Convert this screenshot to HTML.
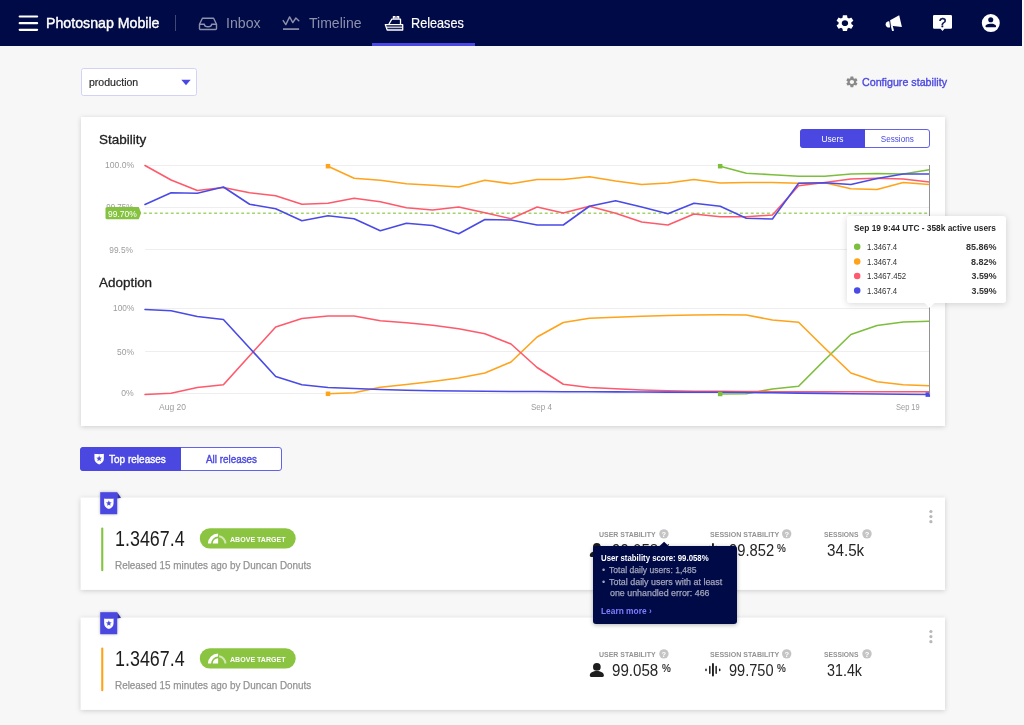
<!DOCTYPE html>
<html lang="en">
<head>
<meta charset="utf-8">
<title>Photosnap Mobile – Releases</title>
<style>
*{box-sizing:border-box;margin:0;padding:0}
html,body{width:1024px;height:725px;overflow:hidden}
body{background:#f7f7f7;font-family:"Liberation Sans",Arial,sans-serif;color:#1a1a1a;position:relative}
#page{position:absolute;left:0;top:0;width:1024px;height:725px;will-change:transform}
.abs{position:absolute;overflow:visible}
.t{position:absolute;white-space:nowrap;line-height:1;display:block}
.card{position:absolute;left:81px;width:864px;background:#fff;box-shadow:0 1px 5px rgba(0,0,0,.17)}
.seg{position:absolute;border:1px solid #6462e6;border-radius:3px;background:#fff}
.seg .on{position:absolute;left:-1px;top:-1px;bottom:-1px;background:#4a48e0;border-radius:3.5px 0 0 3.5px}
.q{position:absolute;width:9px;height:9px;border-radius:50%;background:#c4c4c4}
.dot{position:absolute;width:3px;height:3px;border-radius:50%;background:#bdbdbd}
</style>
</head>
<body>
<div id="page">
<div class="abs" style="left:0;top:0;width:1022px;height:46px;background:#000a47"></div>
<svg class="abs" style="left:0px;top:0px" width="60" height="46" viewBox="0 0 60 46" preserveAspectRatio="none" ><path d="M19.7 16.5H37.1M19.7 23.15H37.1M19.7 29.85H37.1" stroke="#fff" stroke-width="2.2" stroke-linecap="round" fill="none"/></svg>
<span class="t" style="top:16.10px;font-size:14.5px;color:#fff;left:46.40px;transform:scaleX(0.9778);transform-origin:0 50%;-webkit-text-stroke:0.4px #fff;">Photosnap Mobile</span>
<div class="abs" style="left:175px;top:15px;width:1px;height:16px;background:#434872"></div>
<svg class="abs" style="left:198px;top:16px" width="20" height="15" viewBox="0 0 20 15" preserveAspectRatio="none" ><g fill="none" stroke="#8d91ab" stroke-width="1.4" stroke-linejoin="round"><path d="M1.5 8.3 4.4 2.3h11.2l2.9 6v4.2a1 1 0 0 1-1 1H2.5a1 1 0 0 1-1-1z"/><path d="M1.5 8.3h4.9c0 1.5 1.5 2.5 3.6 2.5s3.6-1 3.6-2.5h4.9"/></g></svg>
<span class="t" style="top:15.30px;font-size:15px;color:#8d91ab;left:225.80px;transform:scaleX(0.9427);transform-origin:0 50%;">Inbox</span>
<svg class="abs" style="left:280px;top:12px" width="24" height="22" viewBox="280 12 24 22" preserveAspectRatio="none" ><g fill="none" stroke="#8d91ab" stroke-linejoin="round" stroke-linecap="round"><path stroke-width="1.4" d="M283.2 20.6 285.8 24.6 289.6 16.9 292.8 22.6 295.9 18 298.8 20.8"/><path stroke-width="1.7" stroke-linecap="butt" d="M283 29.1H299.1"/></g></svg>
<span class="t" style="top:15.30px;font-size:15px;color:#8d91ab;left:309.40px;transform:scaleX(0.9352);transform-origin:0 50%;">Timeline</span>
<svg class="abs" style="left:380px;top:10px" width="28" height="24" viewBox="380 10 28 24" preserveAspectRatio="none" ><g fill="none" stroke="#fff" stroke-width="1.3" stroke-linejoin="round"><path d="M393.4 18.8V16.6h1.6v2.2M397 18.8V16.6h1.7v2.2"/><path d="M388.9 24.2 391.8 19.1h8.7v5.1"/><path d="M385.3 24.6h17.4v5.4H387.2z"/><path d="M386.2 27.3H402.6" stroke-width="1.7" stroke-opacity=".75"/></g></svg>
<span class="t" style="top:15.30px;font-size:15px;color:#fff;left:411.30px;transform:scaleX(0.8442);transform-origin:0 50%;-webkit-text-stroke:0.2px #fff;">Releases</span>
<div class="abs" style="left:372px;top:43px;width:103px;height:3px;background:#4a48e0"></div>
<svg class="abs" style="left:836px;top:14px" width="18" height="18" viewBox="1.946 0.909 20.22 21.818" preserveAspectRatio="none" ><path fill="#fff" d="M19.14 12.94c.04-.3.06-.61.06-.94 0-.32-.02-.64-.07-.94l2.03-1.58c.18-.14.23-.41.12-.61l-1.92-3.32c-.12-.22-.37-.29-.59-.22l-2.39.96c-.5-.38-1.03-.7-1.62-.94l-.36-2.54c-.04-.24-.24-.41-.48-.41h-3.84c-.24 0-.43.17-.47.41l-.36 2.54c-.59.24-1.13.57-1.62.94l-2.39-.96c-.22-.08-.47 0-.59.22L2.74 8.87c-.12.21-.08.47.12.61l2.03 1.58c-.05.3-.09.63-.09.94s.02.64.07.94l-2.03 1.58c-.18.14-.23.41-.12.61l1.92 3.32c.12.22.37.29.59.22l2.39-.96c.5.38 1.03.7 1.62.94l.36 2.54c.05.24.24.41.48.41h3.84c.24 0 .44-.17.47-.41l.36-2.54c.59-.24 1.13-.56 1.62-.94l2.39.96c.22.08.47 0 .59-.22l1.92-3.32c.12-.22.07-.47-.12-.61l-2.01-1.58zM12 15.6c-1.98 0-3.6-1.62-3.6-3.6s1.62-3.6 3.6-3.6 3.6 1.62 3.6 3.6-1.62 3.6-3.6 3.6z"/></svg>
<svg class="abs" style="left:880px;top:10px" width="30" height="26" viewBox="880 10 30 26" preserveAspectRatio="none" ><g fill="#fff"><path d="M890.1 20.3 899.2 15.2 901.9 26.9 890.9 25.8Z"/><path d="M889.4 21.4 890.1 27.2A3.2 3.2 0 0 1 885.6 24.9 3.2 3.2 0 0 1 889.4 21.4Z"/><path d="M890.7 25.6 892.7 25.8 894 30.8 892.1 31.1Z"/></g></svg>
<svg class="abs" style="left:933px;top:15px" width="19" height="17" viewBox="0 0 19 17" preserveAspectRatio="none" ><path fill="#fff" d="M1.2 0h16.6a1.2 1.2 0 0 1 1.2 1.2v11.4a1.2 1.2 0 0 1-1.2 1.2h-6.3l-2 2.3-2-2.3H1.2a1.2 1.2 0 0 1-1.2-1.2V1.2A1.2 1.2 0 0 1 1.2 0z"/></svg>
<span class="t" style="top:16.00px;font-size:13px;color:#000a47;left:938.88px;-webkit-text-stroke:0.5px #000a47;">?</span>
<svg class="abs" style="left:980px;top:12px" width="22" height="22" viewBox="980 12 22 22" preserveAspectRatio="none" ><path fill="#fff" fill-rule="evenodd" d="M981.8 23.1a9 9 0 1 0 18 0a9 9 0 1 0 -18 0ZM988.2 19.7a2.55 2.55 0 1 0 5.1 0a2.55 2.55 0 1 0 -5.1 0ZM985.5 26.4c0-1.9 2.6-2.7 5.3-2.7s5.3.8 5.3 2.7c0 .5-.3.8-.8.8h-9c-.5 0-.8-.3-.8-.8Z"/></svg>
<div class="abs" style="left:80.5px;top:68px;width:116px;height:27.5px;background:#fff;border:1px solid #d2d2f6;border-radius:2.5px"></div>
<span class="t" style="top:76.60px;font-size:11px;color:#2a2a2a;left:88.90px;transform:scaleX(0.9577);transform-origin:0 50%;-webkit-text-stroke:0.2px #2a2a2a;">production</span>
<svg class="abs" style="left:181px;top:79px" width="10" height="7" viewBox="0 0 10 7" preserveAspectRatio="none" ><path fill="#4a48e0" d="M.3.8h9.4L5 6.2z"/></svg>
<svg class="abs" style="left:846px;top:76px" width="12" height="12" viewBox="2.118 1.273 20.1 21.818" preserveAspectRatio="none" ><path fill="#8a8a8a" d="M19.14 12.94c.04-.3.06-.61.06-.94 0-.32-.02-.64-.07-.94l2.03-1.58c.18-.14.23-.41.12-.61l-1.92-3.32c-.12-.22-.37-.29-.59-.22l-2.39.96c-.5-.38-1.03-.7-1.62-.94l-.36-2.54c-.04-.24-.24-.41-.48-.41h-3.84c-.24 0-.43.17-.47.41l-.36 2.54c-.59.24-1.13.57-1.62.94l-2.39-.96c-.22-.08-.47 0-.59.22L2.74 8.87c-.12.21-.08.47.12.61l2.03 1.58c-.05.3-.09.63-.09.94s.02.64.07.94l-2.03 1.58c-.18.14-.23.41-.12.61l1.92 3.32c.12.22.37.29.59.22l2.39-.96c.5.38 1.03.7 1.62.94l.36 2.54c.05.24.24.41.48.41h3.84c.24 0 .44-.17.47-.41l.36-2.54c.59-.24 1.13-.56 1.62-.94l2.39.96c.22.08.47 0 .59-.22l1.92-3.32c.12-.22.07-.47-.12-.61l-2.01-1.58zM12 15.6c-1.98 0-3.6-1.62-3.6-3.6s1.62-3.6 3.6-3.6 3.6 1.62 3.6 3.6-1.62 3.6-3.6 3.6z"/></svg>
<span class="t" style="top:77.00px;font-size:11px;color:#4a48e0;left:862.20px;transform:scaleX(0.9721);transform-origin:0 50%;-webkit-text-stroke:0.35px #4a48e0;">Configure stability</span>
<div class="card" style="top:117px;height:309px"></div>
<span class="t" style="top:133.40px;font-size:13px;color:#222;left:99.20px;transform:scaleX(1.0367);transform-origin:0 50%;-webkit-text-stroke:0.3px #222;">Stability</span>
<span class="t" style="top:276.20px;font-size:13px;color:#222;left:99.20px;transform:scaleX(1.0345);transform-origin:0 50%;-webkit-text-stroke:0.3px #222;">Adoption</span>
<div class="seg" style="left:800px;top:129px;width:130px;height:19px"><div class="on" style="width:65px"></div></div>
<span class="t" style="top:134.20px;font-size:9.5px;color:#fff;left:820.09px;transform:scaleX(0.8866);transform-origin:50% 50%;">Users</span>
<span class="t" style="top:134.20px;font-size:9.5px;color:#4a48e0;left:878.02px;transform:scaleX(0.8558);transform-origin:50% 50%;">Sessions</span>
<svg class="abs" style="left:0;top:0" width="1024" height="725" viewBox="0 0 1024 725"><path d="M145 165.5H930" stroke="#eee" stroke-width="1"/><path d="M145 207.5H930" stroke="#eee" stroke-width="1"/><path d="M145 249.5H930" stroke="#eee" stroke-width="1"/><path d="M145 308.5H930" stroke="#eee" stroke-width="1"/><path d="M145 351.5H930" stroke="#eee" stroke-width="1"/><path d="M145 393.5H930" stroke="#eee" stroke-width="1"/><path d="M143.7 213.2H930" stroke="#a3d36c" stroke-width="1.6" stroke-dasharray="2.9 2.52"/><polyline points="720.2,166.25 746.3,173.25 772.4,174.75 798.6,176.25 824.7,176.25 850.9,174.00 877.0,173.50 903.2,174.00 929.3,169.75" fill="none" stroke="#7dbe3c" stroke-width="1.6" stroke-linejoin="round" stroke-linecap="round"/><polyline points="328.0,166.25 354.1,178.25 380.3,180.25 406.4,183.75 432.6,185.25 458.7,187.00 484.9,180.25 511.0,183.75 537.1,179.50 563.3,179.50 589.4,176.75 615.6,181.00 641.7,184.50 667.9,183.00 694.0,179.50 720.2,183.00 746.3,182.50 772.4,182.50 798.6,183.25 824.7,182.75 850.9,188.75 877.0,189.50 903.2,182.50 929.3,184.50" fill="none" stroke="#ffa31a" stroke-width="1.6" stroke-linejoin="round" stroke-linecap="round"/><polyline points="145.0,165.50 171.1,180.00 197.3,190.50 223.4,187.50 249.6,192.75 275.7,195.75 301.9,204.25 328.0,203.25 354.1,198.25 380.3,201.75 406.4,207.75 432.6,210.00 458.7,207.00 484.9,212.75 511.0,218.75 537.1,207.00 563.3,213.00 589.4,206.25 615.6,213.25 641.7,222.00 667.9,225.00 694.0,214.00 720.2,216.75 746.3,216.75 772.4,215.00 798.6,185.75 824.7,182.50 850.9,179.00 877.0,178.25 903.2,179.00 929.3,182.00" fill="none" stroke="#ff5a6b" stroke-width="1.6" stroke-linejoin="round" stroke-linecap="round"/><polyline points="145.0,204.50 171.1,192.75 197.3,193.25 223.4,187.00 249.6,204.25 275.7,208.75 301.9,220.75 328.0,215.75 354.1,218.75 380.3,230.75 406.4,223.25 432.6,225.50 458.7,233.75 484.9,219.50 511.0,220.00 537.1,225.00 563.3,225.00 589.4,206.25 615.6,200.75 641.7,207.00 667.9,213.75 694.0,203.25 720.2,206.25 746.3,218.25 772.4,219.00 798.6,183.25 824.7,182.75 850.9,184.50 877.0,178.50 903.2,174.00 929.3,174.00" fill="none" stroke="#4a4ae6" stroke-width="1.6" stroke-linejoin="round" stroke-linecap="round"/><polyline points="720.2,394.00 746.3,393.75 772.4,389.00 798.6,386.25 824.7,360.00 850.9,334.50 877.0,325.50 903.2,322.00 929.3,321.25" fill="none" stroke="#7dbe3c" stroke-width="1.6" stroke-linejoin="round" stroke-linecap="round"/><polyline points="328.0,393.75 354.1,392.75 380.3,387.25 406.4,384.50 432.6,381.50 458.7,378.00 484.9,373.00 511.0,362.00 537.1,337.00 563.3,322.50 589.4,318.25 615.6,317.25 641.7,316.25 667.9,315.50 694.0,315.00 720.2,314.75 746.3,315.00 772.4,320.00 798.6,322.25 824.7,348.00 850.9,373.00 877.0,381.75 903.2,384.75 929.3,385.75" fill="none" stroke="#ffa31a" stroke-width="1.6" stroke-linejoin="round" stroke-linecap="round"/><polyline points="145.0,394.50 171.1,393.25 197.3,387.50 223.4,384.75 249.6,355.75 275.7,327.00 301.9,318.50 328.0,316.00 354.1,316.00 380.3,320.75 406.4,322.75 432.6,325.25 458.7,328.75 484.9,333.75 511.0,344.00 537.1,367.50 563.3,384.25 589.4,387.50 615.6,388.75 641.7,390.00 667.9,390.75 694.0,391.25 720.2,391.25 746.3,391.50 772.4,391.75 798.6,391.80 824.7,391.80 850.9,391.80 877.0,391.80 903.2,391.80 929.3,391.80" fill="none" stroke="#ff5a6b" stroke-width="1.6" stroke-linejoin="round" stroke-linecap="round"/><polyline points="145.0,309.50 171.1,310.75 197.3,316.50 223.4,319.50 249.6,348.00 275.7,376.50 301.9,384.75 328.0,387.50 354.1,388.50 380.3,389.50 406.4,390.25 432.6,390.75 458.7,391.00 484.9,391.25 511.0,391.50 537.1,391.50 563.3,391.75 589.4,391.80 615.6,391.90 641.7,392.00 667.9,392.10 694.0,392.20 720.2,392.30 746.3,392.50 772.4,392.80 798.6,393.10 824.7,393.40 850.9,393.70 877.0,394.00 903.2,394.20 929.3,394.50" fill="none" stroke="#4a4ae6" stroke-width="1.6" stroke-linejoin="round" stroke-linecap="round"/><rect x="325.75" y="163.95" width="4.5" height="4.5" fill="#ffa31a"/><rect x="717.90" y="163.95" width="4.5" height="4.5" fill="#7dbe3c"/><rect x="325.75" y="391.55" width="4.5" height="4.5" fill="#ffa31a"/><rect x="717.90" y="391.75" width="4.5" height="4.5" fill="#7dbe3c"/><rect x="925.55" y="392.35" width="4.5" height="4.5" fill="#4a4ae6"/><path d="M929.5 165V394.5" stroke="#929292" stroke-width="1"/></svg>
<span class="t" style="top:160.20px;font-size:9.5px;color:#9c9c9c;left:101.77px;transform:scaleX(0.9059);transform-origin:100% 50%;">100.0%</span>
<span class="t" style="top:202.40px;font-size:9.5px;color:#9c9c9c;left:100.77px;transform:scaleX(0.8376);transform-origin:100% 50%;">99.75%</span>
<svg class="abs" style="left:100px;top:200px" width="50" height="30" viewBox="100 200 50 30" preserveAspectRatio="none" ><path d="M107 207H138.7L141.2 213.1 138.7 219.2H107A1.5 1.5 0 0 1 105.5 217.7V208.5A1.5 1.5 0 0 1 107 207Z" fill="#84c240"/></svg>
<span class="t" style="top:245.20px;font-size:9.5px;color:#9c9c9c;left:106.06px;transform:scaleX(0.8761);transform-origin:100% 50%;">99.5%</span>
<span class="t" style="top:209.00px;font-size:9.5px;color:#fff;left:108.20px;transform:scaleX(0.8935);transform-origin:0 50%;">99.70%</span>
<span class="t" style="top:303.20px;font-size:9.5px;color:#9c9c9c;left:109.69px;transform:scaleX(0.8720);transform-origin:100% 50%;">100%</span>
<span class="t" style="top:346.70px;font-size:9.5px;color:#9c9c9c;left:114.98px;transform:scaleX(0.8940);transform-origin:100% 50%;">50%</span>
<span class="t" style="top:388.20px;font-size:9.5px;color:#9c9c9c;left:120.27px;transform:scaleX(0.9101);transform-origin:100% 50%;">0%</span>
<span class="t" style="top:402.30px;font-size:9.5px;color:#9c9c9c;left:159.20px;transform:scaleX(0.8963);transform-origin:0 50%;">Aug 20</span>
<span class="t" style="top:402.30px;font-size:9.5px;color:#9c9c9c;left:530.80px;transform:scaleX(0.8458);transform-origin:0 50%;">Sep 4</span>
<span class="t" style="top:402.30px;font-size:9.5px;color:#9c9c9c;left:896.30px;transform:scaleX(0.7867);transform-origin:0 50%;">Sep 19</span>
<div class="abs" style="left:846.5px;top:216px;width:159.5px;height:87px;background:#fff;border-radius:3px;box-shadow:0 1px 7px rgba(0,0,0,.16)"></div>
<svg class="abs" style="left:924px;top:302px" width="11" height="7" viewBox="0 -0.5 11 7" preserveAspectRatio="none" ><path fill="#fff" d="M0 0h11L5.5 5.2z"/></svg>
<span class="t" style="top:223.90px;font-size:9px;color:#262626;font-weight:700;left:854.40px;transform:scaleX(0.9275);transform-origin:0 50%;">Sep 19 9:44 UTC - 358k active users</span>
<svg class="abs" style="left:850px;top:240px" width="14" height="13" viewBox="850 240 14 13" preserveAspectRatio="none" ><circle cx="857.2" cy="246.8" r="3.25" fill="#7dbe3c"/></svg>
<span class="t" style="top:242.90px;font-size:9px;color:#333;left:866.80px;transform:scaleX(0.8617);transform-origin:0 50%;">1.3467.4</span>
<span class="t" style="top:242.90px;font-size:9px;color:#333;font-weight:700;left:965.97px;">85.86%</span>
<svg class="abs" style="left:850px;top:255px" width="14" height="13" viewBox="850 255 14 13" preserveAspectRatio="none" ><circle cx="857.2" cy="261.4" r="3.25" fill="#ffa31a"/></svg>
<span class="t" style="top:257.50px;font-size:9px;color:#333;left:866.80px;transform:scaleX(0.8617);transform-origin:0 50%;">1.3467.4</span>
<span class="t" style="top:257.50px;font-size:9px;color:#333;font-weight:700;left:970.97px;">8.82%</span>
<svg class="abs" style="left:850px;top:270px" width="14" height="12" viewBox="850 270 14 12" preserveAspectRatio="none" ><circle cx="857.2" cy="276.0" r="3.25" fill="#ff5a6b"/></svg>
<span class="t" style="top:272.10px;font-size:9px;color:#333;left:866.80px;transform:scaleX(0.8702);transform-origin:0 50%;">1.3467.452</span>
<span class="t" style="top:272.10px;font-size:9px;color:#333;font-weight:700;left:970.97px;transform:scaleX(0.9792);transform-origin:100% 50%;">3.59%</span>
<svg class="abs" style="left:850px;top:284px" width="14" height="13" viewBox="850 284 14 13" preserveAspectRatio="none" ><circle cx="857.2" cy="290.6" r="3.25" fill="#4a4ae6"/></svg>
<span class="t" style="top:286.70px;font-size:9px;color:#333;left:866.80px;transform:scaleX(0.8617);transform-origin:0 50%;">1.3467.4</span>
<span class="t" style="top:286.70px;font-size:9px;color:#333;font-weight:700;left:970.97px;transform:scaleX(0.9792);transform-origin:100% 50%;">3.59%</span>
<div class="seg" style="left:80px;top:447px;width:202px;height:24px"><div class="on" style="width:101px"></div></div>
<svg class="abs" style="left:94px;top:453px" width="10" height="12" viewBox="-0.309 -0.505 10.309 12.11" preserveAspectRatio="none" ><path fill="#fff" d="M0.15 0.35C2.2 0.75 7.8 0.75 9.85 0.35V5.4C9.85 8.3 7.7 10 5 11 2.3 10 .15 8.3 .15 5.4Z"/><polygon fill="#4a48e0" points="5.00,2.10 5.79,4.11 7.95,4.24 6.28,5.62 6.82,7.71 5.00,6.55 3.18,7.71 3.72,5.62 2.05,4.24 4.21,4.11"/></svg>
<span class="t" style="top:454.20px;font-size:11px;color:#fff;left:109.30px;transform:scaleX(0.9106);transform-origin:0 50%;-webkit-text-stroke:0.4px #fff;">Top releases</span>
<span class="t" style="top:454.20px;font-size:11px;color:#4a48e0;left:206.00px;transform:scaleX(0.8969);transform-origin:0 50%;-webkit-text-stroke:0.4px #4a48e0;">All releases</span>
<svg class="abs" style="left:70px;top:490px;filter:drop-shadow(0 1px 2.5px rgba(0,0,0,.17))" width="890" height="110" viewBox="70 490 890 110" preserveAspectRatio="none" ><rect x="80.6" y="497.5" width="864.4" height="92.4" fill="#fff"/></svg>
<svg class="abs" style="left:100px;top:492px;filter:drop-shadow(0 0 1.5px rgba(0,0,0,.28))" width="22" height="22" viewBox="-0.2 -0.197 22 21.696" preserveAspectRatio="none" ><path fill="#3230a8" d="M17 0 20.8 5.4 17 6.2z"/><path fill="#4a48e0" d="M0 0H17V21.7H0z"/></svg>
<svg class="abs" style="left:104px;top:498px" width="10" height="12" viewBox="0 -0.202 10.309 12.11" preserveAspectRatio="none" ><path fill="#fff" d="M0.15 0.35C2.2 0.75 7.8 0.75 9.85 0.35V5.4C9.85 8.3 7.7 10 5 11 2.3 10 .15 8.3 .15 5.4Z"/><polygon fill="#4a48e0" points="5.00,2.10 5.79,4.11 7.95,4.24 6.28,5.62 6.82,7.71 5.00,6.55 3.18,7.71 3.72,5.62 2.05,4.24 4.21,4.11"/></svg>
<svg class="abs" style="left:99px;top:525px" width="6" height="48" viewBox="99 525 6 48" preserveAspectRatio="none" ><rect x="101.2" y="527.4" width="2.1" height="43.8" rx="1" fill="#84c441"/></svg>
<span class="t" style="top:528.00px;font-size:22px;color:#1c1c1c;left:115.00px;transform:scaleX(0.8139);transform-origin:0 50%;">1.3467.4</span>
<svg class="abs" style="left:195px;top:522px" width="110" height="34" viewBox="195 522 110 34" preserveAspectRatio="none" ><rect x="199.8" y="528.3" width="95.9" height="20.3" rx="10.15" fill="#8ac440"/></svg>
<svg class="abs" style="left:205px;top:530px" width="24" height="16" viewBox="205 530 24 16" preserveAspectRatio="none" ><path fill="#fff" d="M207.9 543.6A10.2 10.2 0 0 1 218.1 533.4V536.6A7 7 0 0 0 211.1 543.6Z"/><path fill="#fff" d="M212.7 543.6A5.4 5.4 0 0 1 218.1 538.2V543.6Z"/><path fill="#fff" fill-opacity=".6" d="M219 535.35A8.3 8.3 0 0 1 226.4 543.6H224.4A6.3 6.3 0 0 0 219 537.35Z"/></svg>
<span class="t" style="top:536.00px;font-size:7.2px;color:#fff;font-weight:700;left:230.20px;transform:scaleX(0.9827);transform-origin:0 50%;">ABOVE TARGET</span>
<span class="t" style="top:559.70px;font-size:11px;color:#929292;left:115.20px;transform:scaleX(0.8992);transform-origin:0 50%;-webkit-text-stroke:0.25px #929292;">Released 15 minutes ago by Duncan Donuts</span>
<span class="t" style="top:531.30px;font-size:7.4px;color:#939393;font-weight:700;left:598.80px;transform:scaleX(0.9413);transform-origin:0 50%;">USER STABILITY</span>
<svg class="abs" style="left:657px;top:527px" width="13" height="14" viewBox="657 527 13 14" preserveAspectRatio="none" ><circle cx="663.9" cy="533.85" r="4.7" fill="#c4c4c4"/></svg>
<span class="t" style="top:530.60px;font-size:7.5px;color:#fff;font-weight:700;left:661.60px;">?</span>
<span class="t" style="top:531.30px;font-size:7.4px;color:#939393;font-weight:700;left:709.60px;transform:scaleX(0.9539);transform-origin:0 50%;">SESSION STABILITY</span>
<svg class="abs" style="left:780px;top:527px" width="13" height="14" viewBox="780 527 13 14" preserveAspectRatio="none" ><circle cx="786.7" cy="533.85" r="4.7" fill="#c4c4c4"/></svg>
<span class="t" style="top:530.60px;font-size:7.5px;color:#fff;font-weight:700;left:784.40px;">?</span>
<span class="t" style="top:531.30px;font-size:7.4px;color:#939393;font-weight:700;left:824.00px;transform:scaleX(0.9101);transform-origin:0 50%;">SESSIONS</span>
<svg class="abs" style="left:861px;top:527px" width="12" height="14" viewBox="861 527 12 14" preserveAspectRatio="none" ><circle cx="867.0" cy="533.85" r="4.7" fill="#c4c4c4"/></svg>
<span class="t" style="top:530.60px;font-size:7.5px;color:#fff;font-weight:700;left:864.70px;">?</span>
<svg class="abs" style="left:585px;top:540px" width="24" height="20" viewBox="585 540 24 20" preserveAspectRatio="none" ><path fill="#1e1e1e" d="M593 546.9a3.85 3.85 0 1 0 7.7 0a3.85 3.85 0 1 0 -7.7 0ZM589.8 555.6c0-3 3.3-4.5 7.05-4.5s7.05 1.5 7.05 4.5c0 .9-.5 1.4-1.4 1.4h-11.3c-.9 0-1.4-.5-1.4-1.4Z"/></svg>
<span class="t" style="top:543.00px;font-size:16.7px;color:#262626;left:611.80px;transform:scaleX(0.9051);transform-origin:0 50%;">99.058</span>
<span class="t" style="top:543.00px;font-size:11px;color:#262626;left:662.20px;transform:scaleX(0.8997);transform-origin:0 50%;-webkit-text-stroke:0.2px #262626;">%</span>
<svg class="abs" style="left:700px;top:540px" width="26" height="20" viewBox="700 540 26 20" preserveAspectRatio="none" ><g stroke="#1e1e1e" stroke-linecap="round" fill="none"><path stroke-width="1.5" d="M706 549.2V550.4M709.8 546.4V553.2M716.15 546.4V553.2M719.7 549.2V550.4"/><path stroke-width="1.9" d="M712.95 544V555.6"/></g></svg>
<span class="t" style="top:543.00px;font-size:16.7px;color:#262626;left:729.30px;transform:scaleX(0.8855);transform-origin:0 50%;">99.852</span>
<span class="t" style="top:543.00px;font-size:11px;color:#262626;left:777.20px;transform:scaleX(0.8997);transform-origin:0 50%;-webkit-text-stroke:0.2px #262626;">%</span>
<span class="t" style="top:543.00px;font-size:16.7px;color:#262626;left:827.30px;transform:scaleX(0.9111);transform-origin:0 50%;">34.5k</span>
<svg class="abs" style="left:926px;top:506px" width="10" height="20" viewBox="926 506 10 20" preserveAspectRatio="none" ><g fill="#b8b8b8"><circle cx="930.9" cy="511.5" r="1.6"/><circle cx="930.9" cy="516.6" r="1.6"/><circle cx="930.9" cy="521.7" r="1.6"/></g></svg>
<svg class="abs" style="left:70px;top:610px;filter:drop-shadow(0 1px 2.5px rgba(0,0,0,.17))" width="890" height="110" viewBox="70 490 890 110" preserveAspectRatio="none" ><rect x="80.6" y="497.5" width="864.4" height="92.4" fill="#fff"/></svg>
<svg class="abs" style="left:100px;top:612px;filter:drop-shadow(0 0 1.5px rgba(0,0,0,.28))" width="22" height="22" viewBox="-0.2 -0.197 22 21.696" preserveAspectRatio="none" ><path fill="#3230a8" d="M17 0 20.8 5.4 17 6.2z"/><path fill="#4a48e0" d="M0 0H17V21.7H0z"/></svg>
<svg class="abs" style="left:104px;top:618px" width="10" height="12" viewBox="0 -0.202 10.309 12.11" preserveAspectRatio="none" ><path fill="#fff" d="M0.15 0.35C2.2 0.75 7.8 0.75 9.85 0.35V5.4C9.85 8.3 7.7 10 5 11 2.3 10 .15 8.3 .15 5.4Z"/><polygon fill="#4a48e0" points="5.00,2.10 5.79,4.11 7.95,4.24 6.28,5.62 6.82,7.71 5.00,6.55 3.18,7.71 3.72,5.62 2.05,4.24 4.21,4.11"/></svg>
<svg class="abs" style="left:99px;top:645px" width="6" height="48" viewBox="99 525 6 48" preserveAspectRatio="none" ><rect x="101.2" y="527.4" width="2.1" height="43.8" rx="1" fill="#ffa31a"/></svg>
<span class="t" style="top:648.00px;font-size:22px;color:#1c1c1c;left:115.00px;transform:scaleX(0.8139);transform-origin:0 50%;">1.3467.4</span>
<svg class="abs" style="left:195px;top:642px" width="110" height="34" viewBox="195 522 110 34" preserveAspectRatio="none" ><rect x="199.8" y="528.3" width="95.9" height="20.3" rx="10.15" fill="#8ac440"/></svg>
<svg class="abs" style="left:205px;top:650px" width="24" height="16" viewBox="205 530 24 16" preserveAspectRatio="none" ><path fill="#fff" d="M207.9 543.6A10.2 10.2 0 0 1 218.1 533.4V536.6A7 7 0 0 0 211.1 543.6Z"/><path fill="#fff" d="M212.7 543.6A5.4 5.4 0 0 1 218.1 538.2V543.6Z"/><path fill="#fff" fill-opacity=".6" d="M219 535.35A8.3 8.3 0 0 1 226.4 543.6H224.4A6.3 6.3 0 0 0 219 537.35Z"/></svg>
<span class="t" style="top:656.00px;font-size:7.2px;color:#fff;font-weight:700;left:230.20px;transform:scaleX(0.9827);transform-origin:0 50%;">ABOVE TARGET</span>
<span class="t" style="top:679.70px;font-size:11px;color:#929292;left:115.20px;transform:scaleX(0.8992);transform-origin:0 50%;-webkit-text-stroke:0.25px #929292;">Released 15 minutes ago by Duncan Donuts</span>
<span class="t" style="top:651.30px;font-size:7.4px;color:#939393;font-weight:700;left:598.80px;transform:scaleX(0.9413);transform-origin:0 50%;">USER STABILITY</span>
<svg class="abs" style="left:657px;top:647px" width="13" height="14" viewBox="657 527 13 14" preserveAspectRatio="none" ><circle cx="663.9" cy="533.85" r="4.7" fill="#c4c4c4"/></svg>
<span class="t" style="top:650.60px;font-size:7.5px;color:#fff;font-weight:700;left:661.60px;">?</span>
<span class="t" style="top:651.30px;font-size:7.4px;color:#939393;font-weight:700;left:709.60px;transform:scaleX(0.9539);transform-origin:0 50%;">SESSION STABILITY</span>
<svg class="abs" style="left:780px;top:647px" width="13" height="14" viewBox="780 527 13 14" preserveAspectRatio="none" ><circle cx="786.7" cy="533.85" r="4.7" fill="#c4c4c4"/></svg>
<span class="t" style="top:650.60px;font-size:7.5px;color:#fff;font-weight:700;left:784.40px;">?</span>
<span class="t" style="top:651.30px;font-size:7.4px;color:#939393;font-weight:700;left:824.00px;transform:scaleX(0.9101);transform-origin:0 50%;">SESSIONS</span>
<svg class="abs" style="left:861px;top:647px" width="12" height="14" viewBox="861 527 12 14" preserveAspectRatio="none" ><circle cx="867.0" cy="533.85" r="4.7" fill="#c4c4c4"/></svg>
<span class="t" style="top:650.60px;font-size:7.5px;color:#fff;font-weight:700;left:864.70px;">?</span>
<svg class="abs" style="left:585px;top:660px" width="24" height="20" viewBox="585 540 24 20" preserveAspectRatio="none" ><path fill="#1e1e1e" d="M593 546.9a3.85 3.85 0 1 0 7.7 0a3.85 3.85 0 1 0 -7.7 0ZM589.8 555.6c0-3 3.3-4.5 7.05-4.5s7.05 1.5 7.05 4.5c0 .9-.5 1.4-1.4 1.4h-11.3c-.9 0-1.4-.5-1.4-1.4Z"/></svg>
<span class="t" style="top:663.00px;font-size:16.7px;color:#262626;left:611.80px;transform:scaleX(0.9051);transform-origin:0 50%;">99.058</span>
<span class="t" style="top:663.00px;font-size:11px;color:#262626;left:662.20px;transform:scaleX(0.8997);transform-origin:0 50%;-webkit-text-stroke:0.2px #262626;">%</span>
<svg class="abs" style="left:700px;top:660px" width="26" height="20" viewBox="700 540 26 20" preserveAspectRatio="none" ><g stroke="#1e1e1e" stroke-linecap="round" fill="none"><path stroke-width="1.5" d="M706 549.2V550.4M709.8 546.4V553.2M716.15 546.4V553.2M719.7 549.2V550.4"/><path stroke-width="1.9" d="M712.95 544V555.6"/></g></svg>
<span class="t" style="top:663.00px;font-size:16.7px;color:#262626;left:729.30px;transform:scaleX(0.8717);transform-origin:0 50%;">99.750</span>
<span class="t" style="top:663.00px;font-size:11px;color:#262626;left:777.20px;transform:scaleX(0.8997);transform-origin:0 50%;-webkit-text-stroke:0.2px #262626;">%</span>
<span class="t" style="top:663.00px;font-size:16.7px;color:#262626;left:827.30px;transform:scaleX(0.8573);transform-origin:0 50%;">31.4k</span>
<svg class="abs" style="left:926px;top:626px" width="10" height="20" viewBox="926 506 10 20" preserveAspectRatio="none" ><g fill="#b8b8b8"><circle cx="930.9" cy="511.5" r="1.6"/><circle cx="930.9" cy="516.6" r="1.6"/><circle cx="930.9" cy="521.7" r="1.6"/></g></svg>
<svg class="abs" style="left:655px;top:540px" width="18" height="8" viewBox="655 540 18 8" preserveAspectRatio="none" ><path fill="#000a47" d="M659 546.6 664.1 541.8 669.2 546.6z"/></svg>
<div class="abs" style="left:592.5px;top:546px;width:144.5px;height:78px;background:#000a47;border-radius:3px;box-shadow:0 1px 4px rgba(0,0,0,.3)"></div>
<span class="t" style="top:553.00px;font-size:9.6px;color:#fff;font-weight:700;left:601.30px;transform:scaleX(0.8135);transform-origin:0 50%;">User stability score: 99.058%</span>
<span class="t" style="top:565.40px;font-size:9.6px;color:#a3a6bc;left:601.80px;transform:scaleX(0.9526);transform-origin:0 50%;">•</span>
<span class="t" style="top:565.40px;font-size:9.6px;color:#a3a6bc;left:608.80px;transform:scaleX(0.8927);transform-origin:0 50%;-webkit-text-stroke:0.25px #a3a6bc;">Total daily users: 1,485</span>
<span class="t" style="top:576.90px;font-size:9.6px;color:#a3a6bc;left:601.80px;transform:scaleX(0.9526);transform-origin:0 50%;">•</span>
<span class="t" style="top:576.90px;font-size:9.6px;color:#a3a6bc;left:608.80px;transform:scaleX(0.9270);transform-origin:0 50%;-webkit-text-stroke:0.25px #a3a6bc;">Total daily users with at least</span>
<span class="t" style="top:587.90px;font-size:9.6px;color:#a3a6bc;left:609.50px;transform:scaleX(0.9234);transform-origin:0 50%;-webkit-text-stroke:0.25px #a3a6bc;">one unhandled error: 466</span>
<span class="t" style="top:606.00px;font-size:9.6px;color:#7f7dff;font-weight:700;left:601.30px;transform:scaleX(0.8723);transform-origin:0 50%;">Learn more ›</span>
</div>
</body>
</html>
